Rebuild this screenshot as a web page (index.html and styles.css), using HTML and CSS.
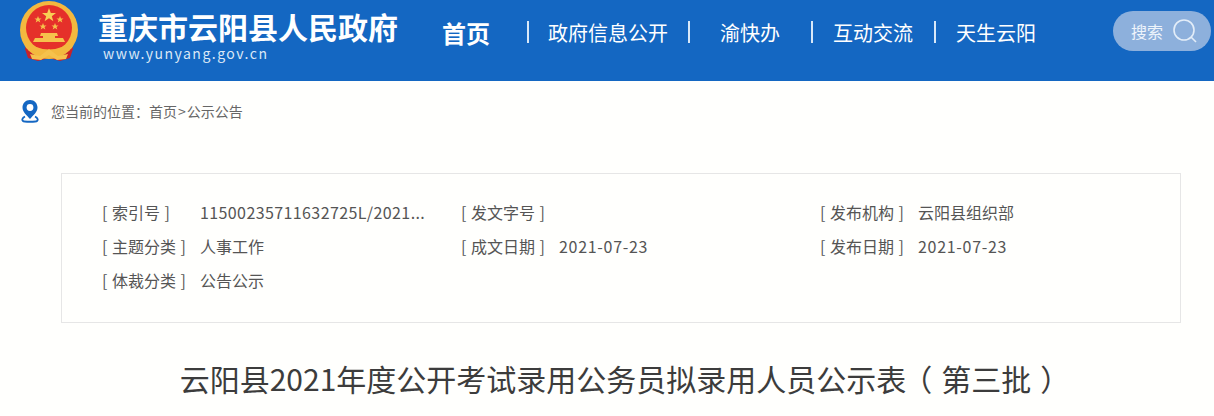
FILE: index.html
```html
<!DOCTYPE html>
<html lang="zh-CN">
<head>
    <meta charset="UTF-8">
    <meta name="viewport" content="width=device-width, initial-scale=1.0">
    <title>云阳县人民政府</title>
    <link rel="stylesheet" href="styles.css">
</head>
<body>
    <!-- Header -->
    <header class="header">
        <svg class="emblem" width="58" height="60" viewBox="0 0 58 60">
            <path d="M8 38 L5 48 L8 57 L18 60 L29 57 L40 60 L50 57 L53 48 L50 38 Z" fill="#c8222a"/>
            <circle cx="29" cy="29" r="29" fill="#f3b93f"/>
            <circle cx="29" cy="27" r="23" fill="#e5302a"/>
            <path d="M29 7 L30.8 12 L36 12 L31.800 15.200 L33.400 20.200 L29 17.200 L24.600 20.200 L26.200 15.200 L22 12 L27.200 12 Z" fill="#f8cf55"/>
            <path d="M18 15 L19 17.500 L21.500 17.500 L19.500 19 L20.300 21.500 L18 20 L15.700 21.500 L16.500 19 L14.500 17.500 L17 17.500 Z" fill="#f6c24c"/>
            <path d="M40 15 L41 17.500 L43.500 17.500 L41.500 19 L42.300 21.500 L40 20 L37.700 21.500 L38.500 19 L36.500 17.500 L39 17.500 Z" fill="#f6c24c"/>
            <path d="M23 22 L24 24.500 L26.500 24.500 L24.500 26 L25.300 28.500 L23 27 L20.700 28.500 L21.500 26 L19.500 24.500 L22 24.500 Z" fill="#f6c24c"/>
            <path d="M35 22 L36 24.500 L38.500 24.500 L36.500 26 L37.300 28.500 L35 27 L32.700 28.500 L33.500 26 L31.500 24.500 L34 24.500 Z" fill="#f6c24c"/>
            <path d="M21 32 H37 L38 35 H35 V37 H43 L45 41 H13 L15 37 H23 V35 H20 Z" fill="#f6c24c"/>
            <path d="M4 39 Q29 58 54 39 L52 47 Q29 62 6 47 Z" fill="#f3b93f"/>
            <path d="M10 53 L20 55 L29 48 L38 55 L48 53 L46 58 L37 59 L29 54 L21 59 L12 58 Z" fill="#f6c24c"/>
        </svg>
        <div class="brand">
            <div class="brand-name">重庆市云阳县人民政府</div>
            <div class="brand-url">www.yunyang.gov.cn</div>
        </div>
        <nav class="nav">
            <a class="nav-home" href="#">首页</a>
            <i class="sep"></i>
            <a class="nav-info" href="#">政府信息公开</a>
            <i class="sep"></i>
            <a class="nav-wide" href="#">渝快办</a>
            <i class="sep"></i>
            <a class="nav-shift" href="#">互动交流</a>
            <i class="sep"></i>
            <a href="#">天生云阳</a>
        </nav>
        <div class="search">
            <span>搜索</span>
            <svg width="26" height="26" viewBox="0 0 26 26" fill="none" stroke="#e3edf8" stroke-width="1.6">
                <circle cx="12" cy="12" r="10"/>
                <path d="M19 19 L24 24"/>
            </svg>
        </div>
    </header>

    <!-- Breadcrumb -->
    <div class="crumb">
        <svg width="18" height="24" viewBox="0 0 18 24">
            <path d="M9 1 C4.500 1 1.500 4.500 1.500 8.500 C1.500 13 6 16.500 9 20 C12 16.500 16.500 13 16.500 8.500 C16.500 4.500 13.500 1 9 1 Z" fill="#1467c2"/>
            <circle cx="9" cy="8.500" r="3.400" fill="#fff"/>
            <path d="M4 17.500 C1 19 0.800 21 2 22 C3 23 15 23 16 22 C17.200 21 17 19 14 17.500" fill="none" stroke="#1467c2" stroke-width="1.800"/>
        </svg>
        <span>您当前的位置：首页<span class="crumb-gt">&gt;</span>公示公告</span>
    </div>

    <!-- Document info -->
    <section class="info">
        <div class="info-item"><span class="info-label">[ 索引号 ]</span><span class="code">11500235711632725L/2021...</span></div>
        <div class="info-item"><span class="info-label">[ 发文字号 ]</span><span></span></div>
        <div class="info-item"><span class="info-label">[ 发布机构 ]</span><span>云阳县组织部</span></div>
        <div class="info-item"><span class="info-label">[ 主题分类 ]</span><span>人事工作</span></div>
        <div class="info-item"><span class="info-label">[ 成文日期 ]</span><span class="date">2021-07-23</span></div>
        <div class="info-item"><span class="info-label">[ 发布日期 ]</span><span class="date">2021-07-23</span></div>
        <div class="info-item"><span class="info-label">[ 体裁分类 ]</span><span>公告公示</span></div>
    </section>

    <h1 class="doc-title">云阳县2021年度公开考试录用公务员拟录用人员公示表<span class="paren-open">（</span>第三批<span class="paren-close">）</span></h1>
</body>
</html>
```

FILE: styles.css
```css
* {
    box-sizing: border-box;
}

html,
body {
    height: 416px;
    overflow: hidden;
}

body {
    margin: 0;
    font-family: "Noto Sans CJK SC", "Noto Sans", sans-serif;
    background-color: #fffffd;
    color: #555;
}

.header {
    height: 81px;
    background-color: #1467c2;
    display: flex;
    align-items: flex-start;
    color: #fff;
}

.emblem {
    margin: 1px 0 0 20px;
    flex: none;
}

.brand {
    width: 344px;
    margin-left: 20px;
    flex: none;
}

.brand-name {
    margin-top: 7px;
    font-size: 30px;
    font-weight: 700;
    line-height: 38px;
    white-space: nowrap;
}

.brand-url {
    margin-left: 5px;
    font-size: 14px;
    line-height: 16px;
    letter-spacing: 1.5px;
    color: #dbe8f6;
}

.nav {
    display: flex;
    align-items: center;
    gap: 20px;
    height: 64px;
    font-size: 20px;
    white-space: nowrap;
}

.nav a {
    color: #fff;
    text-decoration: none;
}

.nav .nav-home {
    font-size: 24px;
    font-weight: 700;
    margin-right: 17px;
}

.nav .nav-info {
    margin-left: -1px;
}

.nav .nav-wide {
    padding: 0 11px 0 10px;
}

.nav .nav-shift {
    margin-right: 1px;
}

.sep {
    width: 2px;
    height: 22px;
    background-color: #d8e8f8;
}

.search {
    width: 98px;
    height: 40px;
    margin: 11px 0 0 77px;
    padding-left: 18px;
    display: flex;
    align-items: center;
    gap: 9px;
    border-radius: 20px;
    background-color: #8db0dc;
    font-size: 16px;
    color: #eef4fb;
    flex: none;
}

.crumb {
    display: flex;
    align-items: center;
    gap: 12px;
    margin: 18px 0 0 21px;
    font-size: 14px;
    color: #666;
}

.crumb-gt {
    margin: 0 1px;
}

.info {
    width: 1120px;
    height: 150px;
    margin: 50px 0 0 61px;
    padding: 21px 0 0 40px;
    display: grid;
    grid-template-columns: repeat(3, 359px);
    grid-auto-rows: 34px;
    align-items: center;
    border: 1px solid #e6e6e6;
    font-size: 16px;
    color: #555;
}

.info-item {
    display: flex;
    white-space: nowrap;
}

.info-label {
    width: 98px;
    flex: none;
    word-spacing: 1px;
}

.code {
    letter-spacing: 0.4px;
}

.date {
    letter-spacing: 0.7px;
}

.doc-title {
    margin: 33px 0 0;
    padding-left: 21px;
    font-size: 30px;
    font-weight: 400;
    line-height: 44px;
    text-align: center;
    white-space: nowrap;
    color: #3c3c3c;
}

.paren-open {
    font-feature-settings: "halt";
    margin: 0 9px 0 11px;
}

.paren-close {
    font-feature-settings: "halt";
    margin-left: 9px;
}
```
